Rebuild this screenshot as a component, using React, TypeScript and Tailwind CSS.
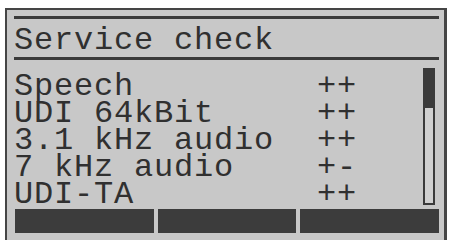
import React from 'react'

const ROWS = [
  { name: 'Speech', value: '++' },
  { name: 'UDI 64kBit', value: '++' },
  { name: '3.1 kHz audio', value: '++' },
  { name: '7 kHz audio', value: '+-' },
  { name: 'UDI-TA', value: '++' },
]

export default function App() {
  return (
    <div className="w-[451px] h-[240px] bg-white pt-[8px] pl-[5px] pr-[4px] overflow-hidden">
      <div
        className="h-[240px] bg-[#c8c8c8] border-l-2 border-t-2 border-r-[3px] border-[#454545] pl-[7px] pr-[5px] pt-[6px] text-[#303030] text-[32px] tracking-[0.8px]"
        style={{ fontFamily: '"Liberation Mono", "DejaVu Sans Mono", monospace' }}
      >
        <div className="h-[3px] bg-[#3a3a3a]" />
        <div className="h-[38px] pt-[8px] leading-[27px] whitespace-pre">Service check</div>
        <div className="h-[3px] bg-[#3a3a3a]" />

        <div className="flex">
          <div className="flex-1 pt-[13px]">
            {ROWS.map((row) => (
              <div key={row.name} className="flex h-[27px] leading-[27px] whitespace-pre">
                <span className="w-[303px]">{row.name}</span>
                <span>{row.value}</span>
              </div>
            ))}
          </div>
          <div className="mt-[8px] mr-[4px] w-[12px] h-[137px] flex flex-col border-2 border-[#3a3a3a] bg-[#d0d0d0]">
            <div className="h-[38px] bg-[#3a3a3a]" />
          </div>
        </div>

        <div className="flex gap-[4px] pl-[1px] mt-[1px]">
          <div className="flex-1 h-[24px] bg-[#3c3c3c]" />
          <div className="flex-1 h-[24px] bg-[#3c3c3c]" />
          <div className="flex-1 h-[24px] bg-[#3c3c3c]" />
        </div>
      </div>
    </div>
  )
}
